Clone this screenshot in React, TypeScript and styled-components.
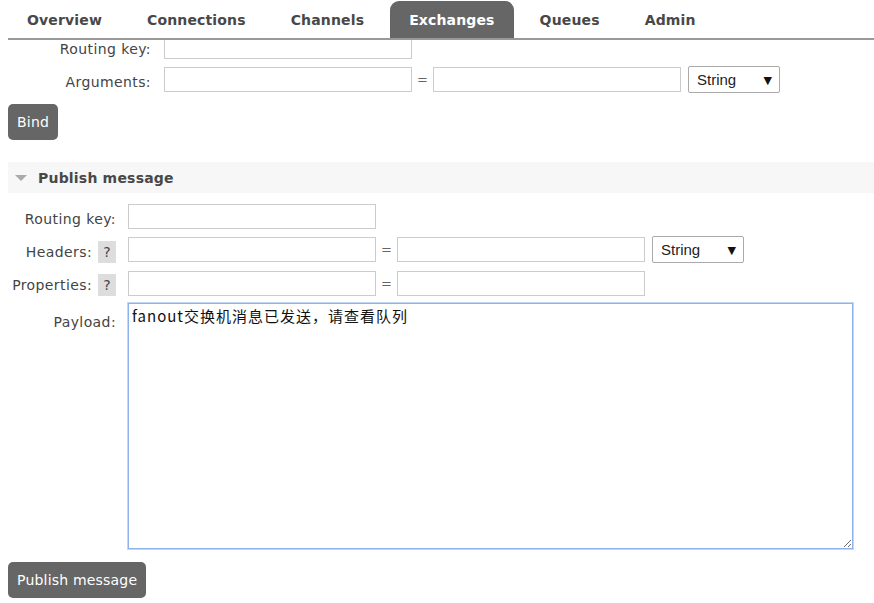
import React, { useLayoutEffect, useRef } from "react";
import styled, { createGlobalStyle } from "styled-components";

const Global = createGlobalStyle`
  html, body { margin: 0; padding: 0; height: 100%; background: #fff; overflow: hidden; }
  body { font-family: "DejaVu Sans", Verdana, sans-serif; font-size: 14px; color: #444; }
  #root { height: 100%; }
  * { box-sizing: border-box; }
`;

const Page = styled.div`
  height: 100vh;
  display: flex;
  flex-direction: column;
  padding-left: 8px;
`;

const TabBar = styled.nav`
  display: flex;
  align-items: flex-end;
  gap: 7px;
  height: 40px;
  border-bottom: 2px solid #999;
  flex-shrink: 0;
  position: relative;
  z-index: 1;
  background: #fff;
`;

const Tab = styled.a<{ $active?: boolean }>`
  height: 37px;
  padding: 0 19px;
  display: flex;
  align-items: center;
  font-weight: bold;
  font-size: 14px;
  letter-spacing: 0.15px;
  border-radius: 9px 9px 0 0;
  background: ${(p) => (p.$active ? "#666" : "transparent")};
  color: ${(p) => (p.$active ? "#fff" : "#484848")};
  cursor: pointer;
`;

const Scroller = styled.div`
  flex: 1;
  overflow: hidden;
`;

const Content = styled.div`
  padding-bottom: 60px;
`;

const Form = styled.div<{ $labelWidth: number; $gap: number }>`
  display: grid;
  grid-template-columns: ${(p) => p.$labelWidth}px auto;
  column-gap: ${(p) => p.$gap}px;
  row-gap: 7px;
  align-items: center;
  justify-items: start;
`;

const Label = styled.label<{ $top?: boolean }>`
  justify-self: end;
  align-self: ${(p) => (p.$top ? "start" : "stretch")};
  padding-top: ${(p) => (p.$top ? "11px" : "4px")};
  display: flex;
  align-items: center;
  gap: 6px;
  color: #444;
  font-size: 14px;
  letter-spacing: 0.4px;
  white-space: nowrap;
`;

const Help = styled.span`
  width: 18px;
  height: 22px;
  background: #ddd;
  display: inline-flex;
  align-items: center;
  justify-content: center;
  color: #444;
  font-size: 14px;
  letter-spacing: 0;
`;

const Field = styled.div`
  display: flex;
  align-items: center;
`;

const TextInput = styled.input`
  width: 248px;
  height: 25px;
  border: 1px solid #ccc;
  background: #fff;
  padding: 2px 4px;
  font: inherit;
  outline: none;
`;

const Eq = styled.span`
  width: 21px;
  text-align: center;
  color: #666;
  font-size: 13px;
`;

const SelectWrap = styled.div`
  position: relative;
  margin-left: 7px;
  &::after {
    content: "▼";
    position: absolute;
    right: 8px;
    top: 50%;
    transform: translateY(-50%);
    font-size: 11px;
    color: #111;
    pointer-events: none;
    font-family: "DejaVu Sans", sans-serif;
  }
`;

const Select = styled.select`
  appearance: none;
  width: 92px;
  height: 27px;
  border: 1px solid #aaa;
  border-radius: 2px;
  background: #fff;
  padding: 0 8px;
  font-family: "Liberation Sans", Arial, sans-serif;
  font-size: 15px;
  color: #222;
  outline: none;
`;

const Button = styled.button`
  height: 36px;
  padding: 0 9px;
  background: #666;
  color: #fff;
  border: none;
  border-radius: 5px;
  font-family: "DejaVu Sans", Verdana, sans-serif;
  font-size: 14px;
  letter-spacing: 0.2px;
  cursor: pointer;
`;

const BindBar = styled.div`
  margin-top: 11px;
`;

const SectionHeader = styled.h2`
  margin: 22px 0 11px;
  height: 31px;
  background: #f7f7f7;
  display: flex;
  align-items: center;
  gap: 11px;
  padding-left: 7px;
  font-size: 14px;
  font-weight: bold;
  letter-spacing: 0.2px;
  color: #484848;
`;

const Caret = styled.span`
  width: 0;
  height: 0;
  border-left: 6px solid transparent;
  border-right: 6px solid transparent;
  border-top: 6px solid #aaa;
`;

const Payload = styled.textarea`
  width: 725px;
  height: 246px;
  border: 1px solid #8fb2ec;
  box-shadow: 0 0 0 1px #c3d6f5;
  padding: 2px 3px;
  font-family: "Noto Sans CJK SC", "DejaVu Sans", sans-serif;
  font-size: 15px;
  letter-spacing: 1px;
  line-height: 20px;
  color: #111;
  outline: none;
  resize: both;
`;

const Footer = styled.div`
  margin-top: 13px;
`;

const tabs = ["Overview", "Connections", "Channels", "Exchanges", "Queues", "Admin"];

export default function App() {
  const scrollRef = useRef<HTMLDivElement>(null);
  useLayoutEffect(() => {
    if (scrollRef.current) scrollRef.current.scrollTop = 6;
  }, []);

  return (
    <>
      <Global />
      <Page>
        <TabBar>
          {tabs.map((t) => (
            <Tab key={t} $active={t === "Exchanges"}>
              {t}
            </Tab>
          ))}
        </TabBar>
        <Scroller ref={scrollRef}>
          <Content>
            <Form $labelWidth={143} $gap={13}>
              <Label>Routing key:</Label>
              <TextInput />
              <Label>Arguments:</Label>
              <Field>
                <TextInput />
                <Eq>=</Eq>
                <TextInput />
                <SelectWrap>
                  <Select defaultValue="String">
                    <option>String</option>
                    <option>Number</option>
                    <option>Boolean</option>
                  </Select>
                </SelectWrap>
              </Field>
            </Form>
            <BindBar>
              <Button>Bind</Button>
            </BindBar>

            <SectionHeader>
              <Caret />
              Publish message
            </SectionHeader>

            <Form $labelWidth={108} $gap={12}>
              <Label>Routing key:</Label>
              <TextInput />
              <Label>
                Headers: <Help>?</Help>
              </Label>
              <Field>
                <TextInput />
                <Eq>=</Eq>
                <TextInput />
                <SelectWrap>
                  <Select defaultValue="String">
                    <option>String</option>
                    <option>Number</option>
                    <option>Boolean</option>
                  </Select>
                </SelectWrap>
              </Field>
              <Label>
                Properties: <Help>?</Help>
              </Label>
              <Field>
                <TextInput />
                <Eq>=</Eq>
                <TextInput />
              </Field>
              <Label $top>Payload:</Label>
              <Payload defaultValue="fanout交换机消息已发送，请查看队列" />
            </Form>
            <Footer>
              <Button>Publish message</Button>
            </Footer>
          </Content>
        </Scroller>
      </Page>
    </>
  );
}
